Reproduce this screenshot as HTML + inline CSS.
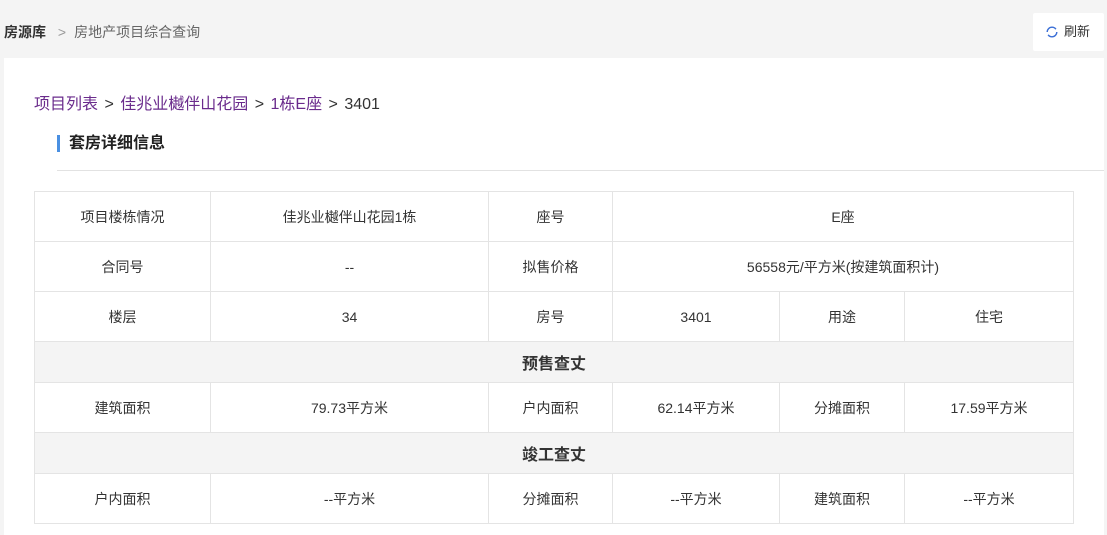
<!DOCTYPE html>
<html><head><meta charset="utf-8"><style>
body{margin:0;width:1107px;height:535px;background:#f4f4f4;font-family:"Liberation Sans","Noto Sans CJK SC",sans-serif;position:relative;overflow:hidden}
.crumb{position:absolute;left:4px;top:22px;font-size:14px;color:#666}
.crumb b{color:#333}
.btn{position:absolute;left:1033px;top:13px;width:71px;height:38px;background:#fff;border-radius:2px;font-size:13px;color:#333;line-height:38px}
.panel{position:absolute;left:4px;top:58px;width:1100px;height:477px;background:#fff}
.nav{position:absolute;left:30px;top:32px;font-size:16px;color:#333;word-spacing:2px}
.nav a{color:#6a2b8c}
.title{position:absolute;left:53px;top:77px;border-left:3px solid #4a90e2;padding-left:9px;height:17px;line-height:17px;font-size:16px;font-weight:bold;color:#222}
.line{position:absolute;left:53px;top:112px;width:1047px;border-top:1px solid #e2e2e2}
table{position:absolute;left:30px;top:133px;border-collapse:collapse;width:1039px;font-size:14px;color:#333;table-layout:fixed}
td{border:1px solid #e4e4e4;text-align:center;height:49px;padding:0}
td.s{height:40px;background:#f4f4f4;font-size:16px;font-weight:bold}
</style></head><body>
<div class="crumb"><b>房源库</b> <span style="color:#999;margin:0 8px">&gt;</span>房地产项目综合查询</div>
<div class="btn"><svg width="12" height="12" viewBox="0 0 12 12" style="position:absolute;left:13px;top:13px"><circle cx="6" cy="6" r="4.8" fill="none" stroke="#3b6fd6" stroke-width="1.4" stroke-dasharray="12 3"/></svg><span style="position:absolute;left:31px">刷新</span></div>
<div class="panel">
<div class="nav"><a>项目列表</a> &gt; <a>佳兆业樾伴山花园</a> &gt; <a>1栋E座</a> &gt; 3401</div>
<div class="title">套房详细信息</div>
<div class="line"></div>
<table>
<colgroup><col style="width:176px"><col style="width:278px"><col style="width:124px"><col style="width:167px"><col style="width:125px"><col style="width:169px"></colgroup>
<tr><td>项目楼栋情况</td><td>佳兆业樾伴山花园1栋</td><td>座号</td><td colspan="3">E座</td></tr>
<tr><td>合同号</td><td>--</td><td>拟售价格</td><td colspan="3">56558元/平方米(按建筑面积计)</td></tr>
<tr><td>楼层</td><td>34</td><td>房号</td><td>3401</td><td>用途</td><td>住宅</td></tr>
<tr><td class="s" colspan="6">预售查丈</td></tr>
<tr><td>建筑面积</td><td>79.73平方米</td><td>户内面积</td><td>62.14平方米</td><td>分摊面积</td><td>17.59平方米</td></tr>
<tr><td class="s" colspan="6">竣工查丈</td></tr>
<tr><td>户内面积</td><td>--平方米</td><td>分摊面积</td><td>--平方米</td><td>建筑面积</td><td>--平方米</td></tr>
</table>
</div>
</body></html>
